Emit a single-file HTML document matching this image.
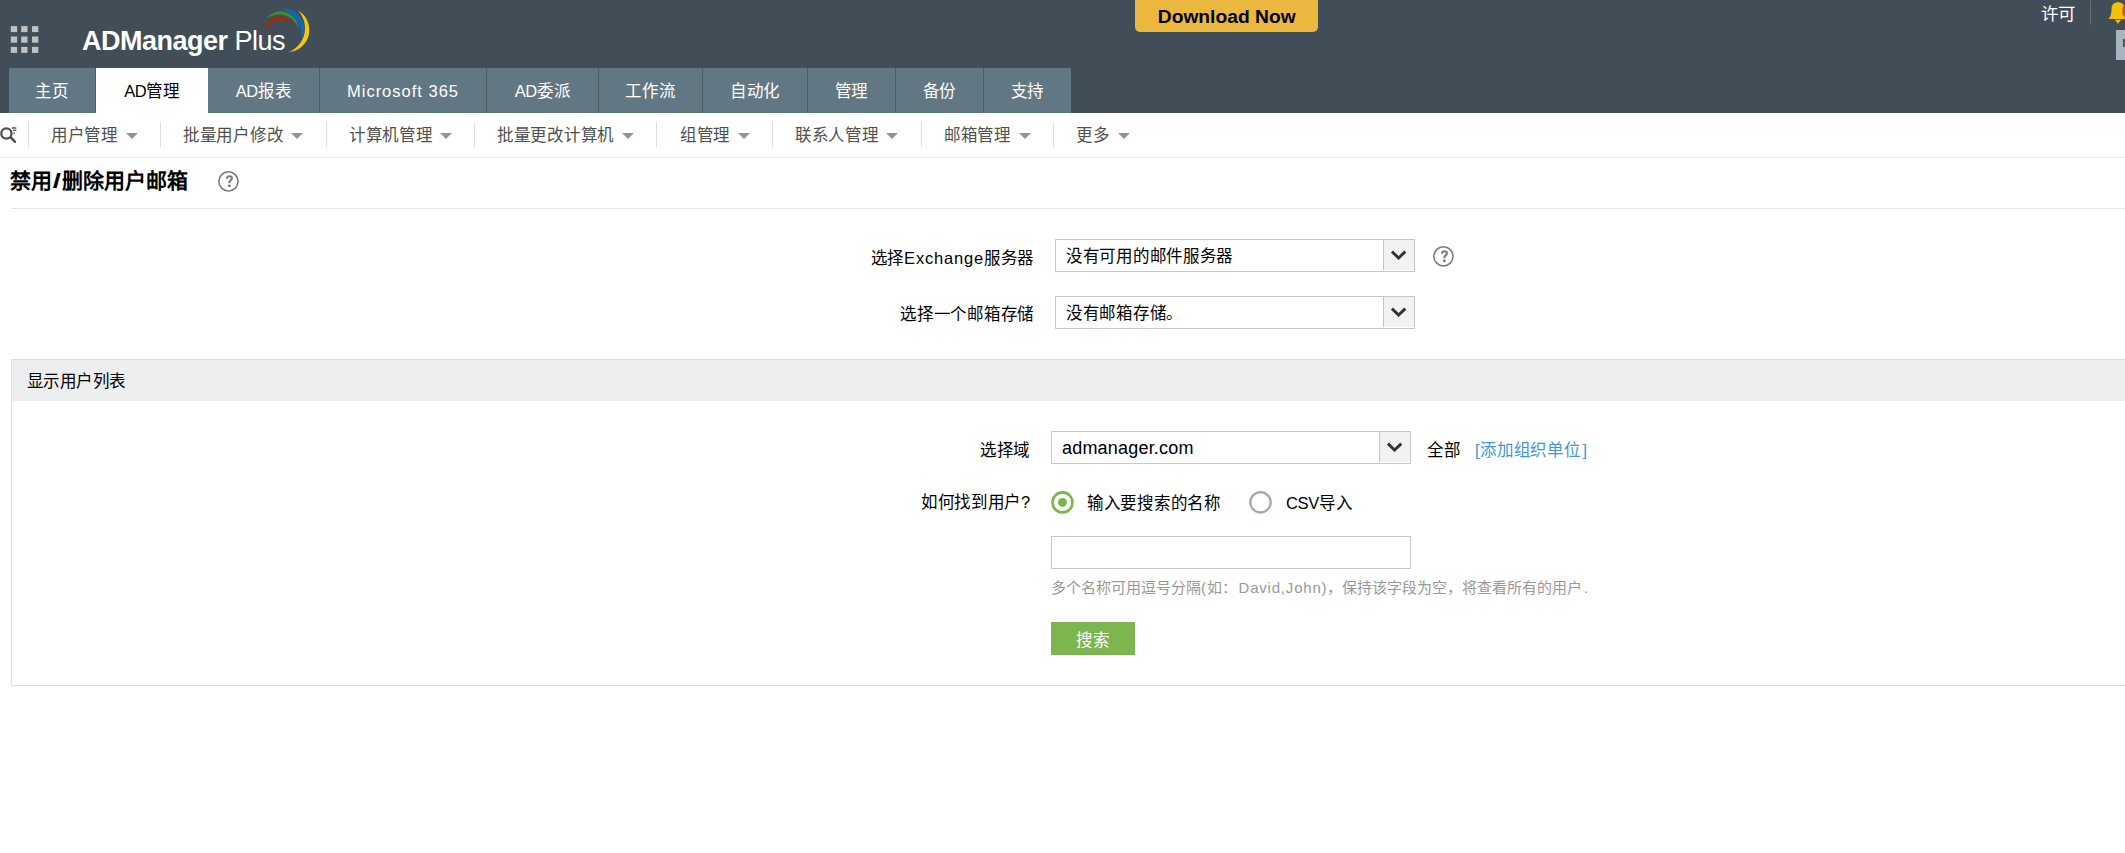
<!DOCTYPE html>
<html lang="zh-CN">
<head>
<meta charset="utf-8">
<style>
*{box-sizing:border-box;margin:0;padding:0}
html,body{width:2125px;height:853px;overflow:hidden;background:#fff}
body{position:relative;font-family:"Liberation Sans",sans-serif;color:#000}
.a{position:absolute;white-space:nowrap}
#hdr{position:absolute;left:0;top:0;width:2125px;height:113px;background:#414e57}
#dl{position:absolute;left:1135px;top:0;width:183px;height:32px;background:#ebb73e;border-radius:0 0 5px 5px;font-weight:bold;font-size:17.5px;line-height:34px;text-align:center;color:#000}
.tab{position:absolute;top:68px;height:45px;background:#627784;color:#fff;font-size:16.5px;letter-spacing:-0.3px;line-height:47px;text-align:center;border-right:1px solid #4c5b64}
.tab.on{background:#fff;color:#000;border-right:none}
.sub{position:absolute;top:113px;height:44px;font-size:16.5px;letter-spacing:-0.3px;line-height:45px;color:#505050}
.sep{position:absolute;top:122px;width:1px;height:25px;background:#dcdfe2}
.caret{position:absolute;top:133px;width:0;height:0;border-left:6px solid transparent;border-right:6px solid transparent;border-top:6.5px solid #94929a}
.lbl{position:absolute;font-size:16.5px;letter-spacing:-0.3px;line-height:23px;text-align:right;color:#000}
.sel{position:absolute;width:360px;height:33px;border:1px solid #c8c8c8;background:#fff}
.sel .btn{position:absolute;right:0;top:0;width:31px;height:30px;border-left:1px solid #c4c4c4;background:#f2f2f2}
.sel .txt{position:absolute;left:10px;top:1px;line-height:31px;font-size:16.5px;letter-spacing:-0.3px;color:#000}
</style>
</head>
<body>
<div id="hdr">
  <svg class="a" style="left:0;top:0" width="60" height="60">
    <g fill="#bfc1c3">
      <rect x="10.8" y="26.1" width="6.3" height="6"/><rect x="21.2" y="26.1" width="6.3" height="6"/><rect x="32" y="26.1" width="6.3" height="6"/>
      <rect x="10.8" y="36.5" width="6.3" height="6.2"/><rect x="21.2" y="36.5" width="6.3" height="6.2"/><rect x="32" y="36.5" width="6.3" height="6.2"/>
      <rect x="10.8" y="46.9" width="6.3" height="6"/><rect x="21.2" y="46.9" width="6.3" height="6"/><rect x="32" y="46.9" width="6.3" height="6"/>
    </g>
  </svg>
  <div class="a" id="logo" style="left:82px;top:26px;font-size:27px;line-height:30px;color:#fff;letter-spacing:-0.5px"><b style="font-weight:bold">ADManager</b> Plus</div>
  <svg class="a" style="left:255px;top:0" width="65" height="60">
    <path d="M9.1 30.6 A15.9 15.9 0 0 1 39 24.6 A19.75 19.75 0 0 0 9.1 30.6Z" fill="#9c2b10"/>
    <path d="M11.3 18.6 A17.9 17.9 0 0 1 43.6 28.8 A21.15 21.15 0 0 0 11.3 18.6Z" fill="#3b8a36"/>
    <path d="M27 8.2 A21.3 21.3 0 0 1 46.5 40 A30 30 0 0 0 27 8.2Z" fill="#0b69c4"/>
    <path d="M42.9 10.6 A22.1 22.1 0 0 1 33.8 52 A25.5 25.5 0 0 0 42.9 10.6Z" fill="#f3c60c"/>
  </svg>
  <div id="dl"><span style="display:inline-block;transform:scaleX(1.1)">Download Now</span></div>
  <div class="a" style="left:2041px;top:4px;font-size:17.5px;line-height:20px;color:#fff">许可</div>
  <div class="a" style="left:2090px;top:1px;width:1px;height:24px;background:#6b6e70"></div>
  <svg class="a" style="left:2104px;top:0" width="21" height="28">
    <path d="M4.5 19 C6.8 16.5 7.5 13 7.5 9.5 C7.5 4.6 10 2.2 14 2.2 C18 2.2 20.5 4.6 20.5 9.5 C20.5 13 21.2 16.5 23.5 19 Z" fill="#f2c200"/>
    <path d="M10.8 19.8 L17.2 19.8 L14 23.8Z" fill="#f0bd10"/>
    <rect x="18.3" y="3.8" width="12" height="14.5" rx="6" fill="#c0601a"/>
  </svg>
  <div class="a" style="left:2116px;top:30px;width:9px;height:30px;background:#a9b4c0"></div>
  <div class="a" style="left:2123px;top:39px;width:2px;height:8px;background:#555"></div>

  <div class="tab" style="left:9px;width:87px">主页</div>
  <div class="tab on" style="left:96px;width:112px">AD管理</div>
  <div class="tab" style="left:208px;width:112px">AD报表</div>
  <div class="tab" style="left:320px;width:167px "><span style="letter-spacing:1px">Microsoft 365</span></div>
  <div class="tab" style="left:487px;width:112px">AD委派</div>
  <div class="tab" style="left:599px;width:104px">工作流</div>
  <div class="tab" style="left:703px;width:105px">自动化</div>
  <div class="tab" style="left:808px;width:88px">管理</div>
  <div class="tab" style="left:896px;width:88px">备份</div>
  <div class="tab" style="left:984px;width:87px;border-right:none">支持</div>
</div>

<!-- subnav -->
<svg class="a" style="left:0;top:125px" width="20" height="20">
  <circle cx="6.4" cy="8.5" r="5.1" fill="none" stroke="#505050" stroke-width="2.3"/>
  <path d="M11.2 12.9 L14.9 16.7" stroke="#505050" stroke-width="2.6" stroke-linecap="round"/>
  <path d="M12 3 H16.3 M13.1 5.4 H16.3 M13.3 8.1 H15" stroke="#505050" stroke-width="1.4"/>
</svg>
<div class="sep" style="left:28px"></div>
<div class="sub" style="left:51px">用户管理</div><div class="caret" style="left:126px"></div>
<div class="sep" style="left:160px"></div>
<div class="sub" style="left:183px">批量用户修改</div><div class="caret" style="left:291px"></div>
<div class="sep" style="left:326px"></div>
<div class="sub" style="left:349px">计算机管理</div><div class="caret" style="left:440px"></div>
<div class="sep" style="left:474px"></div>
<div class="sub" style="left:497px">批量更改计算机</div><div class="caret" style="left:622px"></div>
<div class="sep" style="left:656px"></div>
<div class="sub" style="left:680px">组管理</div><div class="caret" style="left:738px"></div>
<div class="sep" style="left:772px"></div>
<div class="sub" style="left:795px">联系人管理</div><div class="caret" style="left:886px"></div>
<div class="sep" style="left:921px"></div>
<div class="sub" style="left:944px">邮箱管理</div><div class="caret" style="left:1019px"></div>
<div class="sep" style="left:1053px"></div>
<div class="sub" style="left:1076px">更多</div><div class="caret" style="left:1118px"></div>
<div class="a" style="left:0;top:157px;width:2125px;height:1px;background:#e3e5e7"></div>

<!-- title -->
<div class="a" style="left:10px;top:168px;font-size:21px;line-height:26px;font-weight:bold;color:#000">禁用<span style="display:inline-block;transform:scaleX(1.4);margin:0 2px 0 2px">/</span>删除用户邮箱</div>
<svg class="a" style="left:216px;top:169px" width="26" height="26">
  <circle cx="12.45" cy="12.35" r="9.6" fill="none" stroke="#7a7a7a" stroke-width="1.6"/>
  <g transform="translate(12.45 12.35)"><path d="M-1.5 -2.6 C-1.5 -4.3 -0.2 -5.05 1.2 -5.05 C2.7 -5.05 3.45 -4.1 3.45 -3 C3.45 -1.7 2.5 -1.15 1.7 -0.5 C1.1 0 0.9 0.5 0.9 1.8" fill="none" stroke="#7a7a7a" stroke-width="2.1" stroke-linecap="butt"/><circle cx="0.9" cy="4.5" r="1.45" fill="#7a7a7a"/></g>
</svg>
<div class="a" style="left:11px;top:208px;width:2114px;height:1px;background:#e6e6e6"></div>

<!-- form rows -->
<div class="lbl" style="left:700px;width:334px;top:247px">选择<span style="letter-spacing:0.8px">Exchange</span>服务器</div>
<div class="sel" style="left:1055px;top:239px"><div class="txt">没有可用的邮件服务器</div><div class="btn"><svg width="31" height="31"><path d="M7.9 11.6 L14.6 18 L21.3 11.6" fill="none" stroke="#2c3436" stroke-width="2.9"/></svg></div></div>
<svg class="a" style="left:1431px;top:244px" width="26" height="26">
  <circle cx="12.45" cy="12.35" r="9.6" fill="none" stroke="#7a7a7a" stroke-width="1.6"/>
  <g transform="translate(12.45 12.35)"><path d="M-1.5 -2.6 C-1.5 -4.3 -0.2 -5.05 1.2 -5.05 C2.7 -5.05 3.45 -4.1 3.45 -3 C3.45 -1.7 2.5 -1.15 1.7 -0.5 C1.1 0 0.9 0.5 0.9 1.8" fill="none" stroke="#7a7a7a" stroke-width="2.1" stroke-linecap="butt"/><circle cx="0.9" cy="4.5" r="1.45" fill="#7a7a7a"/></g>
</svg>
<div class="lbl" style="left:700px;width:334px;top:303px">选择一个邮箱存储</div>
<div class="sel" style="left:1055px;top:296px"><div class="txt">没有邮箱存储。</div><div class="btn"><svg width="31" height="31"><path d="M7.9 11.6 L14.6 18 L21.3 11.6" fill="none" stroke="#2c3436" stroke-width="2.9"/></svg></div></div>

<!-- panel -->
<div class="a" style="left:11px;top:359px;width:2200px;height:327px;border:1px solid #e0e0e0"></div>
<div class="a" style="left:12px;top:360px;width:2200px;height:41px;background:#eceeef"></div>
<div class="a" style="left:27px;top:370px;font-size:16.5px;letter-spacing:-0.55px;line-height:23px;color:#000">显示用户列表</div>

<div class="lbl" style="left:700px;width:330px;top:439px">选择域</div>
<div class="sel" style="left:1051px;top:431px"><div class="txt" style="font-size:18px;letter-spacing:0.2px">admanager.com</div><div class="btn"><svg width="31" height="31"><path d="M7.9 11.6 L14.6 18 L21.3 11.6" fill="none" stroke="#2c3436" stroke-width="2.9"/></svg></div></div>
<div class="a" style="left:1427px;top:439px;font-size:16.5px;letter-spacing:-0.3px;line-height:23px">全部</div>
<div class="a" style="left:1475px;top:439px;font-size:16.5px;letter-spacing:-0.3px;line-height:23px;color:#4196d4"><span style="letter-spacing:0.6px">[</span>添加组织单<span style="letter-spacing:1.8px">位</span>]</div>

<div class="lbl" style="left:700px;width:330px;top:491px">如何找到用户?</div>
<svg class="a" style="left:1050px;top:490px" width="25" height="25">
  <circle cx="12.5" cy="12.4" r="10" fill="none" stroke="#7ab648" stroke-width="2.6"/>
  <circle cx="12.5" cy="12.4" r="4.5" fill="#7ab648"/>
</svg>
<div class="a" style="left:1087px;top:492px;font-size:16.5px;letter-spacing:-0.3px;line-height:22px">输入要搜索的名称</div>
<svg class="a" style="left:1248px;top:490px" width="25" height="25">
  <circle cx="12.5" cy="12.3" r="10.2" fill="none" stroke="#a3abb3" stroke-width="2.4"/>
</svg>
<div class="a" style="left:1286px;top:492px;font-size:16.5px;letter-spacing:-0.3px;line-height:22px">CSV导入</div>

<div class="a" style="left:1051px;top:536px;width:360px;height:33px;border:1px solid #c8c8c8"></div>
<div class="a" style="left:1051px;top:577px;font-size:15px;line-height:21px;color:#999">多个名称可用逗号分隔<span style="letter-spacing:0.7px">(</span>如<span style="letter-spacing:1.8px">：</span><span style="letter-spacing:0.8px">David,John)</span>，保持该字段为空，将查看所有的用<span style="letter-spacing:1.5px">户</span>.</div>
<div class="a" style="left:1051px;top:622px;width:84px;height:33px;background:#7db64e;color:#fff;font-size:16.5px;line-height:36px;text-align:center">搜索</div>
</body>
</html>
